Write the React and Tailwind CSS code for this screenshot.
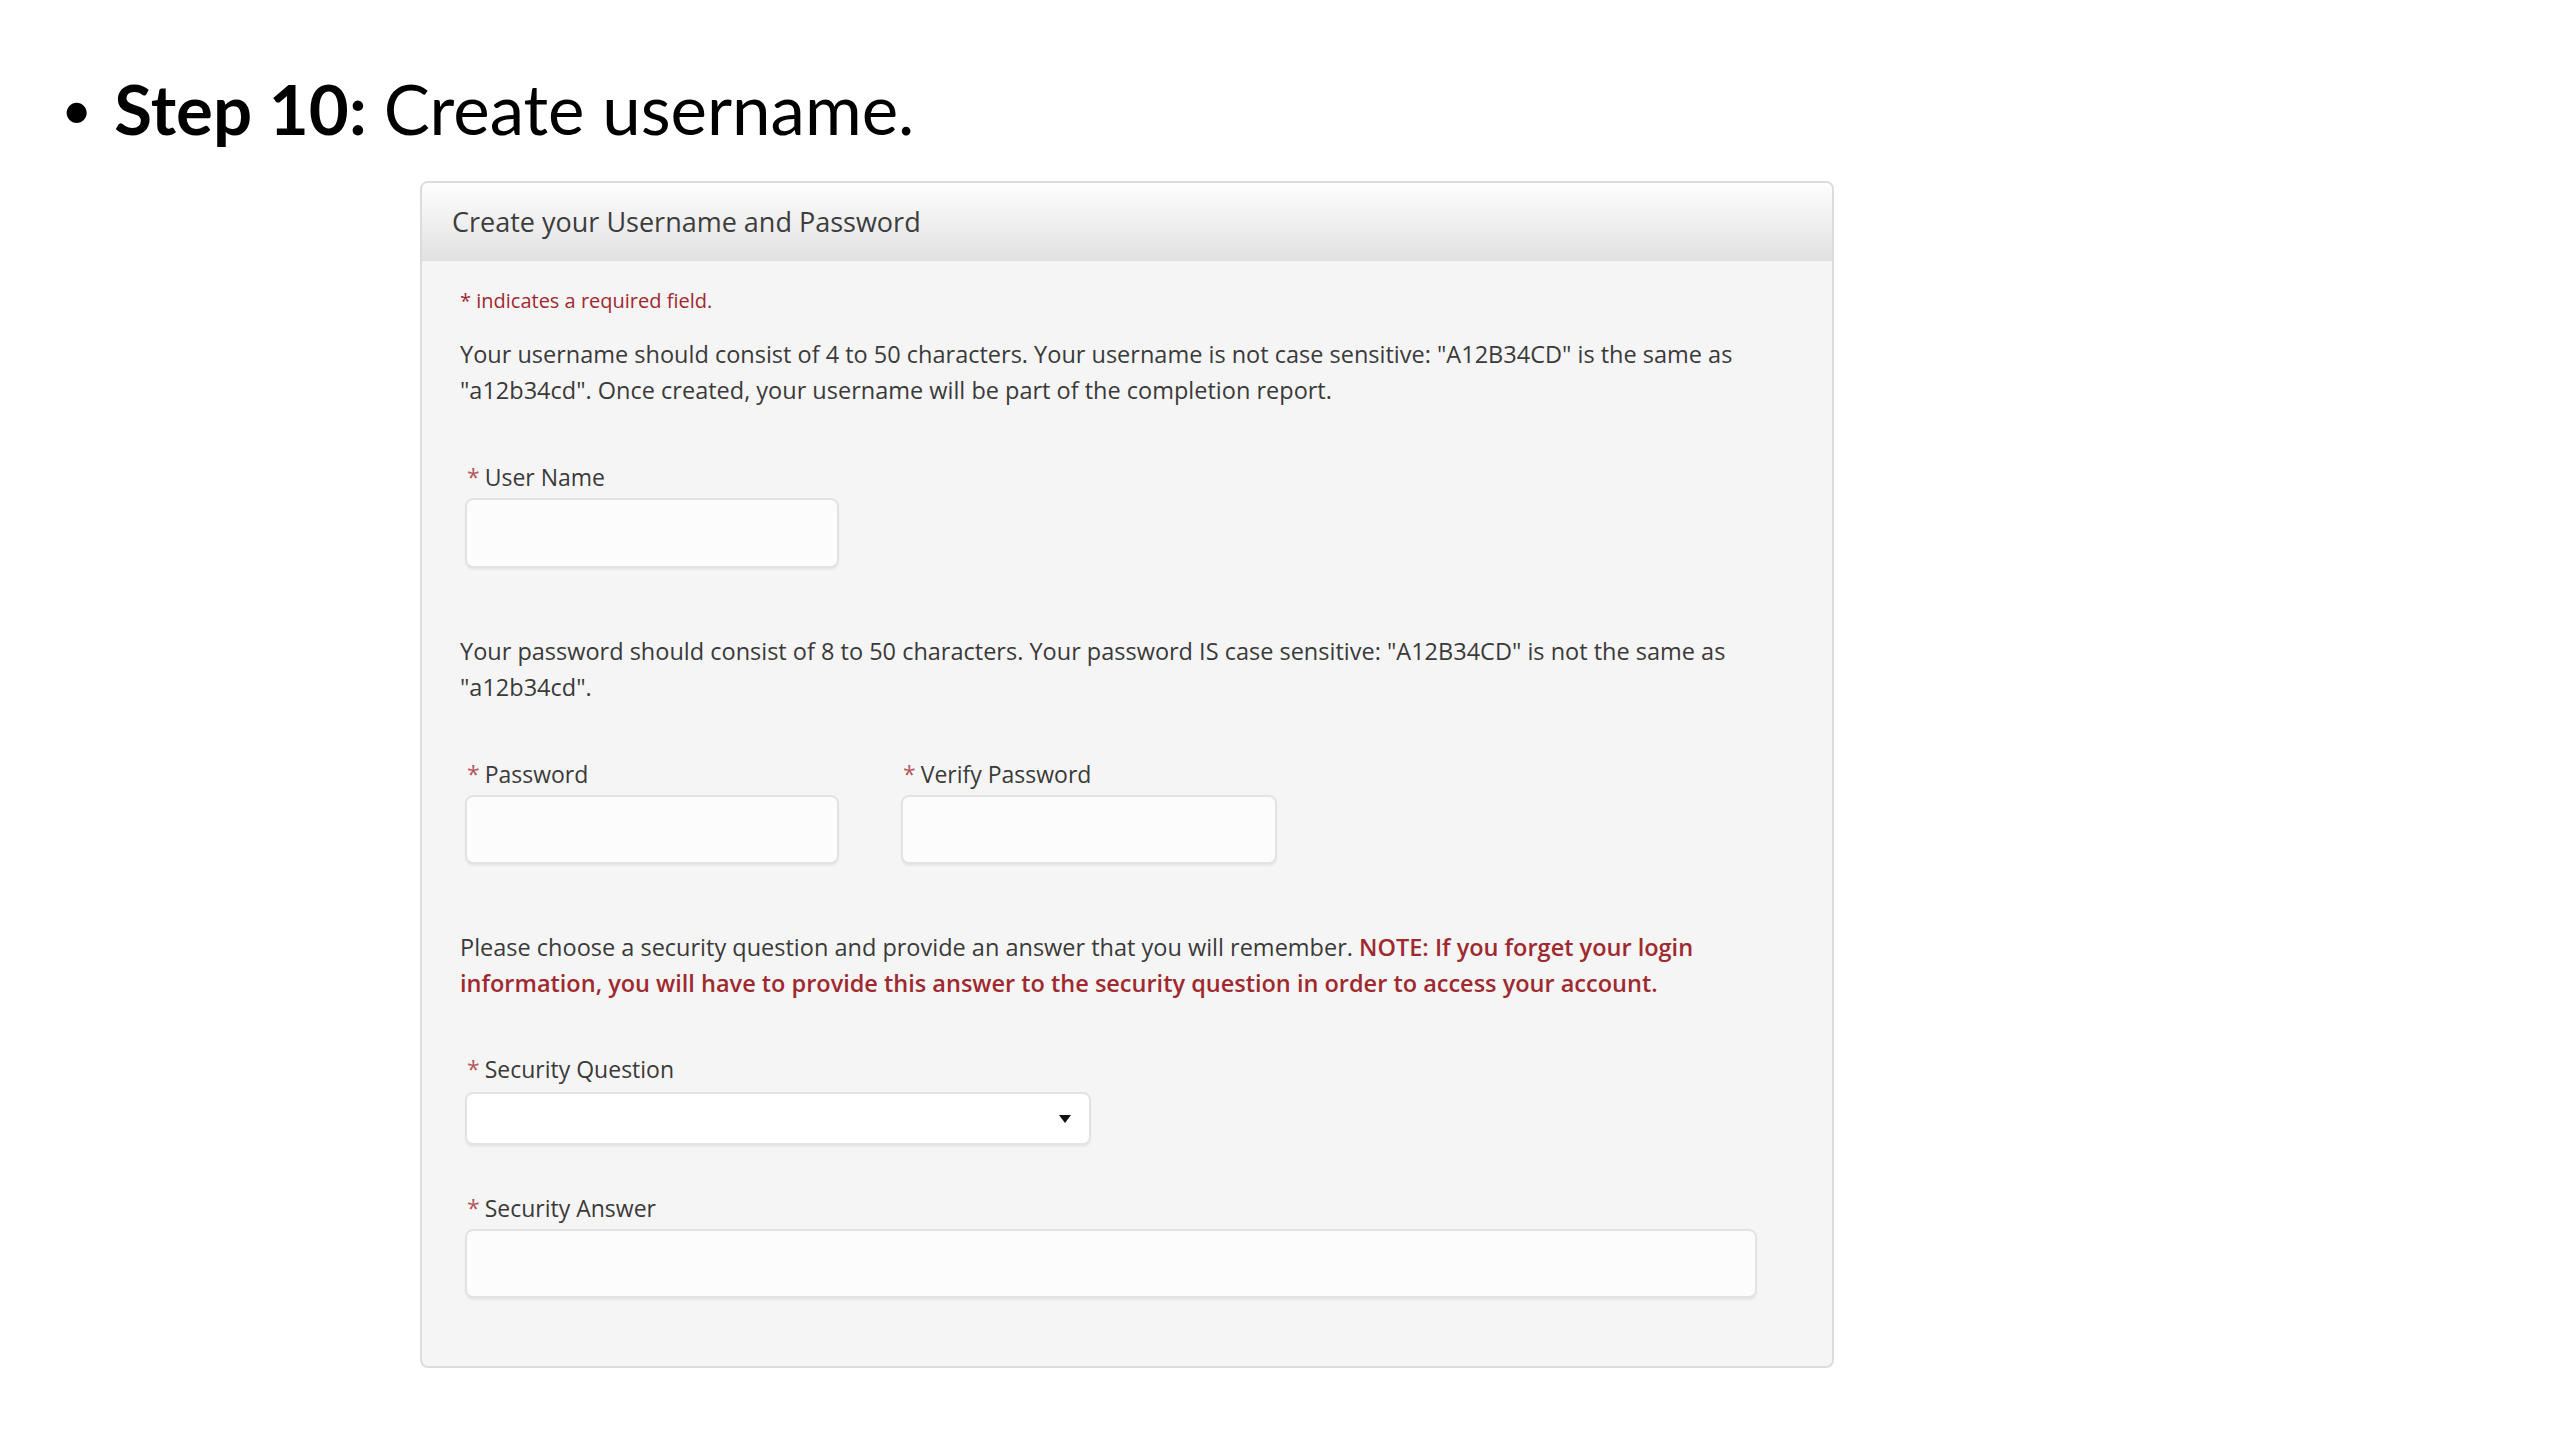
import React from "react";

function Label({ children, pad = "pl-[7px]", className = "" }) {
  return (
    <div className={"text-[23px] leading-[30px] text-[#3a3a3a] " + pad + " " + className}>
      <span className="text-[#b5565a] mr-[5px]">*</span>
      {children}
    </div>
  );
}

function Field({ className = "" }) {
  return (
    <div
      className={
        "bg-[#fcfcfc] border-2 border-[#e3e3e3] rounded-[8px] shadow-[0_2px_2px_rgba(0,0,0,0.06)] " +
        className
      }
    />
  );
}

export default function App() {
  return (
    <div className="w-[2560px] h-[1440px] bg-white relative font-['Open_Sans',sans-serif]">
      <div className="pt-[72px] pl-[61px] flex items-center font-['Lato',sans-serif] text-[69px] leading-[74px] text-black">
        <span className="text-[54px] mr-[22px]">•</span>
        <span className="font-bold mr-[17px]">Step 10:</span>
        <span>Create username.</span>
      </div>

      <div className="mt-[35px] ml-[420px] w-[1414px] border-2 border-[#dcdcdc] rounded-[8px] bg-[#f6f5f5] overflow-hidden">
        <div className="h-[78px] bg-gradient-to-b from-[#fefefe] to-[#e1e1e1] flex items-center pl-[30px] text-[27px] text-[#3d3d3d]">
          Create your Username and Password
        </div>
        <div className="pl-[38px] pr-[60px] pt-[27px] pb-[68px]">
          <div className="text-[20px] leading-[26px] text-[#a1282f]">* indicates a required field.</div>

          <p className="mt-[22px] w-[1320px] text-[23.5px] leading-[36px] text-[#3a3a3a]">
            Your username should consist of 4 to 50 characters. Your username is not case sensitive: "A12B34CD" is the same as "a12b34cd". Once created, your username will be part of the completion report.
          </p>

          <Label className="mt-[54px]">User Name</Label>
          <div className="mt-[6px] pl-[5px]">
            <Field className="w-[374px] h-[70px]" />
          </div>

          <p className="mt-[65px] w-[1320px] text-[23.5px] leading-[36px] text-[#3a3a3a]">
            Your password should consist of 8 to 50 characters. Your password IS case sensitive: "A12B34CD" is not the same as "a12b34cd".
          </p>

          <div className="mt-[54px] flex gap-[62px] pl-[5px]">
            <div>
              <Label pad="pl-[2px]">Password</Label>
              <Field className="mt-[6px] w-[374px] h-[69px]" />
            </div>
            <div>
              <Label pad="pl-[2px]">Verify Password</Label>
              <Field className="mt-[6px] w-[376px] h-[69px]" />
            </div>
          </div>

          <p className="mt-[65px] w-[1320px] text-[23.5px] leading-[36px] text-[#3a3a3a]">
            Please choose a security question and provide an answer that you will remember.{" "}
            <span className="font-semibold text-[#9e2a2f]">
              NOTE: If you forget your login information, you will have to provide this answer to the security question in order to access your account.
            </span>
          </p>

          <Label className="mt-[53px]">Security Question</Label>
          <div className="mt-[8px] ml-[5px] w-[626px] h-[53px] bg-white border-2 border-[#e3e3e3] rounded-[8px] shadow-[0_2px_2px_rgba(0,0,0,0.06)] flex items-center justify-end pr-[18px]">
            <svg width="12" height="8" viewBox="0 0 12 8">
              <path d="M0 0 H12 L6 8 Z" fill="#111" />
            </svg>
          </div>

          <Label className="mt-[48px]">Security Answer</Label>
          <div className="mt-[6px] pl-[5px]">
            <Field className="w-[1292px] h-[69px]" />
          </div>
        </div>
      </div>
    </div>
  );
}
